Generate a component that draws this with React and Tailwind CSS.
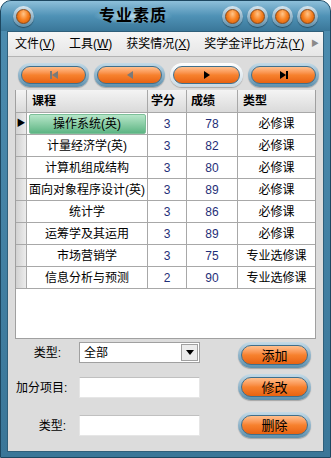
const rows = [
  ['操作系统(英)', '3', '78', '必修课'],
  ['计量经济学(英)', '3', '82', '必修课'],
  ['计算机组成结构', '3', '80', '必修课'],
  ['面向对象程序设计(英)', '3', '89', '必修课'],
  ['统计学', '3', '86', '必修课'],
  ['运筹学及其运用', '3', '89', '必修课'],
  ['市场营销学', '3', '75', '专业选修课'],
  ['信息分析与预测', '2', '90', '专业选修课'],
]

function Orb() {
  return (
    <div className="w-[21px] h-[21px] rounded-full bg-linear-to-b from-[#d6e6ef] to-[#5f8ea8] p-[3px] shadow-[0_1px_1px_rgba(0,0,0,0.4)]">
      <div className="w-full h-full rounded-full bg-radial-[at_50%_30%] from-[#ffc58a] via-[#f7801f] to-[#c95500] border border-[#8a4a1a]" />
    </div>
  )
}

function Pill({ children, focus, className = '' }) {
  return (
    <div
      className={`rounded-full p-[3px] bg-linear-to-b ${
        focus ? 'from-[#ffffff] to-[#c9d9e3]' : 'from-[#c4dbe8] to-[#5d8fac]'
      } shadow-[0_1px_1px_rgba(0,0,0,0.25)] ${className}`}
    >
      <div className="h-full rounded-full border border-[#3f6f8c] bg-linear-to-b from-[#ffc08e] via-[#f7822e] to-[#e8620f] flex items-center justify-center">
        {children}
      </div>
    </div>
  )
}

function NavIcon({ kind, color }) {
  return (
    <svg width="12" height="10" viewBox="0 0 12 10">
      {kind === 'first' && (
        <>
          <rect x="2" y="1" width="2" height="8" fill={color} />
          <polygon points="10,1 10,9 4,5" fill={color} />
        </>
      )}
      {kind === 'prev' && <polygon points="9,1 9,9 3,5" fill={color} />}
      {kind === 'next' && <polygon points="3,1 3,9 9,5" fill={color} />}
      {kind === 'last' && (
        <>
          <polygon points="2,1 2,9 8,5" fill={color} />
          <rect x="8" y="1" width="2" height="8" fill={color} />
        </>
      )}
    </svg>
  )
}

export default function App() {
  return (
    <div className="w-[331px] h-[458px] font-['Liberation_Sans','Noto_Sans_CJK_SC',sans-serif] text-[12px] leading-none text-black bg-white">
      <div className="w-full h-full flex flex-col rounded-t-[11px] border border-[#1d4760] bg-linear-to-b from-[#4d8db0] to-[#3a7698] overflow-hidden">
        {/* title bar */}
        <div className="h-[30px] flex items-center px-[12px] bg-linear-to-b from-[#8ec0da] via-[#4f92b6] to-[#3a7799] shrink-0">
          <Orb />
          <div className="flex-1 flex">
            <span className="ml-[59px] px-[6px] font-bold text-[16px] tracking-[1px] text-black bg-radial from-[#b8dcec] to-transparent to-70%">
              专业素质
            </span>
          </div>
          <div className="flex gap-[4px]">
            <Orb />
            <Orb />
            <Orb />
            <Orb />
          </div>
        </div>

        {/* client area */}
        <div className="flex-1 mx-[6px] mb-[5px] bg-[#dcdcdc] border border-[#2f5f7a] flex flex-col">
          {/* menu */}
          <div className="h-[25px] shrink-0 flex items-center pl-[7px] pr-[4px] bg-linear-to-b from-[#f6f6f6] to-[#e6e6e6] border-b border-[#b4b4b4]">
            <span className="mr-[14px]">文件(<u>V</u>)</span>
            <span className="mr-[14px]">工具(<u>W</u>)</span>
            <span className="mr-[14px]">获奖情况(<u>X</u>)</span>
            <span>奖学金评比方法(<u>Y</u>)</span>
            <span className="ml-auto text-[#8a8a8a] text-[8px]">▶</span>
          </div>

          {/* nav buttons */}
          <div className="flex pl-[10px] mt-[6px] gap-[5px]">
            <Pill className="w-[71px] h-[24px]">
              <NavIcon kind="first" color="#7a7a7a" />
            </Pill>
            <Pill className="w-[71px] h-[24px]">
              <NavIcon kind="prev" color="#7a7a7a" />
            </Pill>
            <Pill focus className="w-[73px] h-[24px]">
              <NavIcon kind="next" color="#000" />
            </Pill>
            <Pill className="w-[71px] h-[24px]">
              <NavIcon kind="last" color="#000" />
            </Pill>
          </div>

          {/* grid */}
          <div className="mx-[7px] mt-[3px] h-[249px] bg-white border border-[#a0a0a0] border-t-0 flex flex-col">
            <div className="flex h-[23px] bg-linear-to-b from-[#f4f4f4] to-[#dadada] border-b border-[#a8a8a8] font-bold">
              <div className="w-[11px] border-r border-[#a8a8a8]" />
              <div className="w-[121px] border-r border-[#a8a8a8] flex items-center pl-[5px]">课程</div>
              <div className="w-[39px] border-r border-[#a8a8a8] flex items-center pl-[3px]">学分</div>
              <div className="w-[51px] border-r border-[#a8a8a8] flex items-center pl-[4px]">成绩</div>
              <div className="flex-1 flex items-center pl-[5px]">类型</div>
            </div>
            {rows.map((r, i) => (
              <div key={i} className="flex h-[22px] border-b border-[#a8a8a8]">
                <div className="w-[11px] border-r border-[#a8a8a8] bg-linear-to-r from-[#d2d2d2] to-[#ececec] flex items-center justify-center">
                  {i === 0 && <span className="text-[9px]">▶</span>}
                </div>
                <div className="w-[121px] border-r border-[#a8a8a8] flex items-center justify-center">
                  {i === 0 ? (
                    <div className="w-[117px] h-[20px] rounded-[2px] border border-[#7cbf98] bg-linear-to-b from-[#b6e6c9] to-[#5cb584] flex items-center justify-center">
                      {r[0]}
                    </div>
                  ) : (
                    r[0]
                  )}
                </div>
                <div className="w-[39px] border-r border-[#a8a8a8] flex items-center justify-center text-[#1f2f78]">{r[1]}</div>
                <div className="w-[51px] border-r border-[#a8a8a8] flex items-center justify-center text-[#1f2f78]">{r[2]}</div>
                <div className="flex-1 flex items-center justify-center">{r[3]}</div>
              </div>
            ))}
          </div>

          {/* form */}
          <div className="flex mt-[2px]">
            <div className="w-[230px] flex flex-col">
              <div className="flex items-center h-[21px] mt-[1px]">
                <span className="w-[71px] text-right pr-[18px]">类型:</span>
                <div className="w-[121px] h-[21px] bg-white border border-[#a0a0a0] flex items-center">
                  <span className="pl-[4px] flex-1">全部</span>
                  <div className="w-[17px] h-[17px] mr-[1px] border border-[#a0a0a0] bg-[#ececec] flex items-center justify-center">
                    <svg width="8" height="5" viewBox="0 0 8 5"><polygon points="0,0 8,0 4,5" fill="#000" /></svg>
                  </div>
                </div>
              </div>
              <div className="flex items-center h-[21px] mt-[14px]">
                <span className="w-[71px] pl-[8px]">加分项目:</span>
                <div className="w-[121px] h-[21px] bg-white border border-[#e6e6e6] border-t-[#c0c0c0]" />
              </div>
              <div className="flex items-center h-[21px] mt-[17px]">
                <span className="w-[71px] text-right pr-[13px]">类型:</span>
                <div className="w-[121px] h-[21px] bg-white border border-[#e6e6e6] border-t-[#c0c0c0]" />
              </div>
            </div>
            <div className="flex flex-col">
              <Pill className="w-[73px] h-[26px] mt-[1px]"><span className="text-[13px]">添加</span></Pill>
              <Pill className="w-[73px] h-[26px] mt-[6px]"><span className="text-[13px]">修改</span></Pill>
              <Pill className="w-[73px] h-[26px] mt-[12px]"><span className="text-[13px]">删除</span></Pill>
            </div>
          </div>
        </div>
      </div>
    </div>
  )
}
